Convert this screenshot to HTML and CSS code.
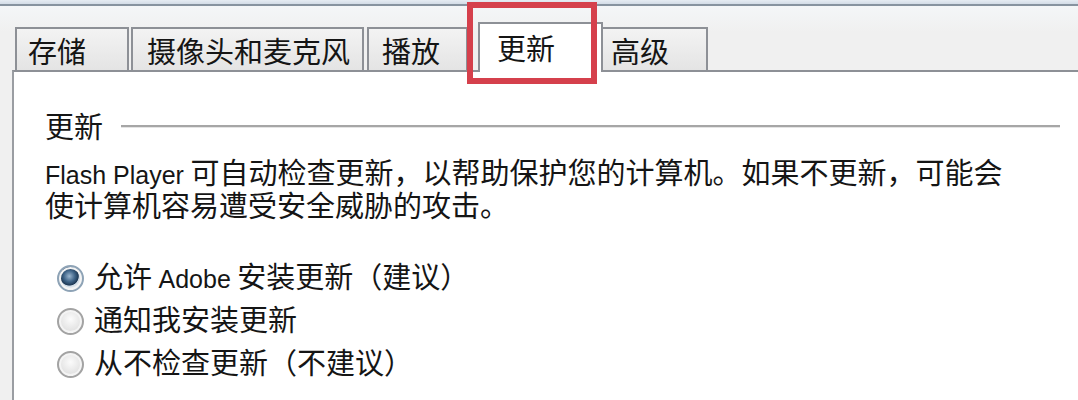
FILE: index.html
```html
<!DOCTYPE html>
<html lang="zh-CN">

<head>
    <meta charset="UTF-8">
    <meta name="viewport" content="width=device-width, initial-scale=1.0">
    <title>Flash Player 设置管理器 - 更新</title>
    <link rel="stylesheet" href="styles.css">
</head>

<body>
    <!-- Bingkai atas jendela -->
    <div class="titlebar"></div>

    <!-- Tab navigasi -->
    <div class="tabs">
        <div class="tab tab-storage">存储</div>
        <div class="tab tab-camera">摄像头和麦克风</div>
        <div class="tab tab-playback">播放</div>
        <div class="tab tab-update active">更新<span class="highlight"></span></div>
        <div class="tab tab-advanced">高级</div>
    </div>

    <!-- Isi tab "更新" -->
    <div class="panel">
        <div class="group-title">
            <span>更新</span>
            <span class="rule"></span>
        </div>

        <p class="desc">
            <span class="latin">Flash Player</span> 可自动检查更新，以帮助保护您的计算机。如果不更新，可能会使计算机容易遭受安全威胁的攻击。
        </p>

        <ul class="options">
            <li><span class="radio checked"></span><span>允许 <span class="latin">Adobe</span> 安装更新（建议）</span></li>
            <li><span class="radio"></span><span>通知我安装更新</span></li>
            <li><span class="radio"></span><span>从不检查更新（不建议）</span></li>
        </ul>
    </div>
</body>

</html>
```

FILE: styles.css
```css
/* Gaya umum */
body {
    font-family: "Liberation Sans", "Noto Sans CJK SC", sans-serif;
    font-size: 29px;
    color: #151515;
    background-color: #f0f0f0;
    margin: 0;
    padding: 0;
    height: 400px;
    overflow: hidden;
}

.latin {
    font-family: "Liberation Sans", sans-serif;
    font-size: 25px;
    line-height: 1;
}

/* Bingkai atas */
.titlebar {
    height: 4px;
    background: linear-gradient(#e6ecf3, #d3dce7);
    border-bottom: 2px solid #8793a0;
}

/* Tab */
.tabs {
    display: flex;
    align-items: flex-end;
    height: 64px;
    padding-left: 15px;
    background: linear-gradient(#f4f6f8, #f0f0f0 40%);
}

.tab {
    box-sizing: border-box;
    height: 43px;
    padding: 4px 0 0 11px;
    line-height: 34px;
    font-family: "Noto Sans CJK SC", sans-serif;
    background: linear-gradient(#f3f3f3, #e4e4e4);
    border: 2px solid #8d9096;
    border-bottom: none;
    white-space: nowrap;
}

.tab-storage {
    width: 114px;
    margin-right: 2px;
}

.tab-camera {
    width: 233px;
    padding-left: 14px;
    margin-right: 3px;
}

.tab-playback {
    width: 101px;
    padding-left: 13px;
    margin-right: 10px;
}

.tab-update {
    width: 125px;
    padding-left: 17px;
}

.tab-advanced {
    width: 107px;
    padding-left: 8px;
    margin-left: -2px;
}

.tab.active {
    position: relative;
    z-index: 2;
    height: 50px;
    margin-bottom: -2px;
    padding-top: 6px;
    background: #ffffff;
}

/* Kotak merah penanda */
.highlight {
    position: absolute;
    left: -13px;
    top: -22px;
    width: 130px;
    height: 82px;
    box-sizing: border-box;
    border: 6px solid #d5404c;
}

/* Panel isi */
.panel {
    box-sizing: border-box;
    height: 330px;
    margin-left: 12px;
    padding: 37px 18px 0 31px;
    background-color: #ffffff;
    border-top: 2px solid #8d9096;
    border-left: 2px solid #9a9da2;
    font-family: "Noto Sans CJK SC", sans-serif;
}

.group-title {
    display: flex;
    align-items: center;
    height: 32px;
    gap: 18px;
}

.group-title .rule {
    flex: 1;
    height: 0;
    margin-top: 2px;
    border-top: 2px solid #a6a6a6;
    border-bottom: 1px solid #e4e4e4;
}

.desc {
    margin: 14px 0 0 0;
    max-width: 975px;
    line-height: 32px;
}

/* Pilihan radio */
.options {
    list-style: none;
    margin: 34px 0 0 0;
    padding: 0 0 0 12px;
}

.options li {
    display: flex;
    align-items: center;
    height: 43px;
    line-height: 43px;
}

.radio {
    box-sizing: border-box;
    flex: none;
    width: 27px;
    height: 27px;
    margin: 6px 10px 0 0;
    border-radius: 50%;
    border: 2px solid #a3a3a3;
    background: radial-gradient(circle at 50% 40%, #fbfbfb 0%, #e6e6e6 55%, #d4d4d4 100%);
    box-shadow: inset 0 0 0 2px #f4f4f4;
}

.radio.checked {
    border-color: #8ea3b6;
    background: radial-gradient(circle at 45% 40%, #9bb6cf 0%, #3f6488 30%, #1f3a56 48%, #cdd9e4 52%, #f2f5f8 70%, #dfe6ec 100%);
}
```
